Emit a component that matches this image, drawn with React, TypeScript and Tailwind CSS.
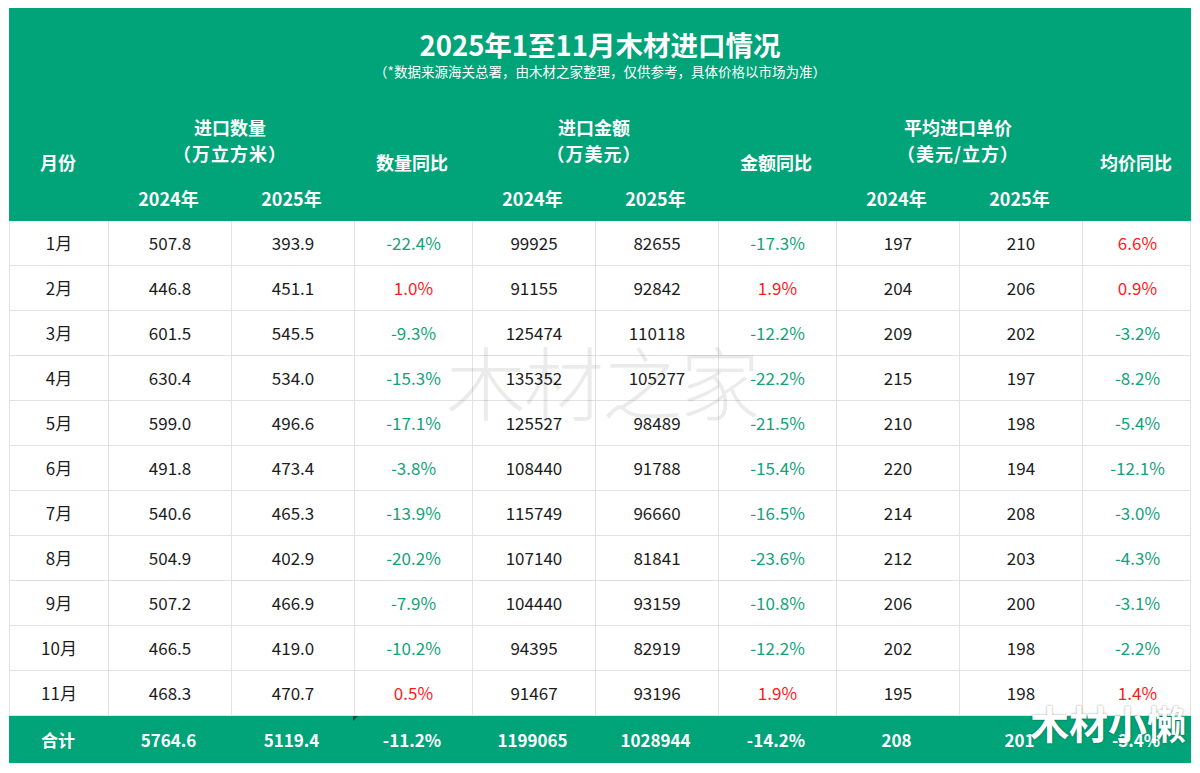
const COLS = 'grid grid-cols-[98px_123px_123px_118px_123px_123px_118px_123px_123px_110px]';

type Row = [string, string, string, string, string, string, string, string, string, string];

const ROWS: Row[] = [
  ['1月', '507.8', '393.9', '-22.4%', '99925', '82655', '-17.3%', '197', '210', '6.6%'],
  ['2月', '446.8', '451.1', '1.0%', '91155', '92842', '1.9%', '204', '206', '0.9%'],
  ['3月', '601.5', '545.5', '-9.3%', '125474', '110118', '-12.2%', '209', '202', '-3.2%'],
  ['4月', '630.4', '534.0', '-15.3%', '135352', '105277', '-22.2%', '215', '197', '-8.2%'],
  ['5月', '599.0', '496.6', '-17.1%', '125527', '98489', '-21.5%', '210', '198', '-5.4%'],
  ['6月', '491.8', '473.4', '-3.8%', '108440', '91788', '-15.4%', '220', '194', '-12.1%'],
  ['7月', '540.6', '465.3', '-13.9%', '115749', '96660', '-16.5%', '214', '208', '-3.0%'],
  ['8月', '504.9', '402.9', '-20.2%', '107140', '81841', '-23.6%', '212', '203', '-4.3%'],
  ['9月', '507.2', '466.9', '-7.9%', '104440', '93159', '-10.8%', '206', '200', '-3.1%'],
  ['10月', '466.5', '419.0', '-10.2%', '94395', '82919', '-12.2%', '202', '198', '-2.2%'],
  ['11月', '468.3', '470.7', '0.5%', '91467', '93196', '1.9%', '195', '198', '1.4%'],
];

const TOTAL: Row = ['合计', '5764.6', '5119.4', '-11.2%', '1199065', '1028944', '-14.2%', '208', '201', '-3.4%'];

function cellColor(v: string) {
  if (!v.endsWith('%')) return 'text-[#1c1c1c]';
  return v.startsWith('-') ? 'text-[#14a27a]' : 'text-[#ff1a1a]';
}

function GroupHead({ title, unit }: { title: string; unit: string }) {
  return (
    <div className="col-span-2 flex flex-col items-center justify-center leading-[26px] pt-[2px]">
      <span>{title}</span>
      <span className="tracking-[1px]">{unit}</span>
    </div>
  );
}

export default function App() {
  return (
    <div
      className="relative h-[773px] w-[1200px] bg-white px-[9px] pt-[8px]"
      style={{ fontFamily: '"Noto Sans CJK SC", "Noto Sans", sans-serif' }}
    >
      {/* header */}
      <div className="h-[213px] bg-[#01a378] text-white">
        <div className="flex h-[95px] flex-col items-center pt-[20px]">
          <h1 className="text-[27.5px] font-bold leading-[32px]">2025年1至11月木材进口情况</h1>
          <p className="mt-[3px] text-[13.5px] leading-[17px]">
            （*数据来源海关总署，由木材之家整理，仅供参考，具体价格以市场为准）
          </p>
        </div>
        <div className={`${COLS} grid-rows-[72px_46px] text-[18px] font-bold`}>
          <div className="row-span-2 flex items-center justify-center">月份</div>
          <GroupHead title="进口数量" unit="（万立方米）" />
          <div className="row-span-2 flex items-center justify-center">数量同比</div>
          <GroupHead title="进口金额" unit="（万美元）" />
          <div className="row-span-2 flex items-center justify-center">金额同比</div>
          <GroupHead title="平均进口单价" unit="（美元/立方）" />
          <div className="row-span-2 flex items-center justify-center">均价同比</div>
          <div className="col-start-2 row-start-2 flex items-center justify-center">2024年</div>
          <div className="col-start-3 row-start-2 flex items-center justify-center">2025年</div>
          <div className="col-start-5 row-start-2 flex items-center justify-center">2024年</div>
          <div className="col-start-6 row-start-2 flex items-center justify-center">2025年</div>
          <div className="col-start-8 row-start-2 flex items-center justify-center">2024年</div>
          <div className="col-start-9 row-start-2 flex items-center justify-center">2025年</div>
        </div>
      </div>

      {/* body */}
      <div className="border-x border-[#e2e2e2]">
        {ROWS.map((row) => (
          <div key={row[0]} className={`${COLS} h-[45px] border-b border-[#e2e2e2] text-[17px]`}>
            {row.map((v, i) => (
              <div
                key={i}
                className={`flex items-center justify-center ${i > 0 ? 'border-l border-[#e2e2e2]' : ''} ${cellColor(v)}`}
              >
                {v}
              </div>
            ))}
          </div>
        ))}
      </div>

      {/* total */}
      <div className={`${COLS} relative h-[47px] bg-[#01a378] text-[17px] font-bold text-white`}>
        {TOTAL.map((v, i) => (
          <div key={i} className="flex items-center justify-center">
            {v}
          </div>
        ))}
        <span className="absolute left-[344px] top-0 h-0 w-0 border-r-[5px] border-t-[5px] border-r-transparent border-t-[#1d4d3a]" />
      </div>

      {/* watermark */}
      <div className="pointer-events-none absolute left-[446px] top-[333px] text-[80px] font-light leading-[92px] tracking-[-2px] text-black/[0.08]">
        木材之家
      </div>

      {/* corner mark */}
      <div className="pointer-events-none absolute left-[1030px] top-[696px] text-[39px] font-bold leading-[52px] text-white [text-shadow:0_0_2px_rgba(0,0,0,0.45)]">
        木材小懒
      </div>
    </div>
  );
}
